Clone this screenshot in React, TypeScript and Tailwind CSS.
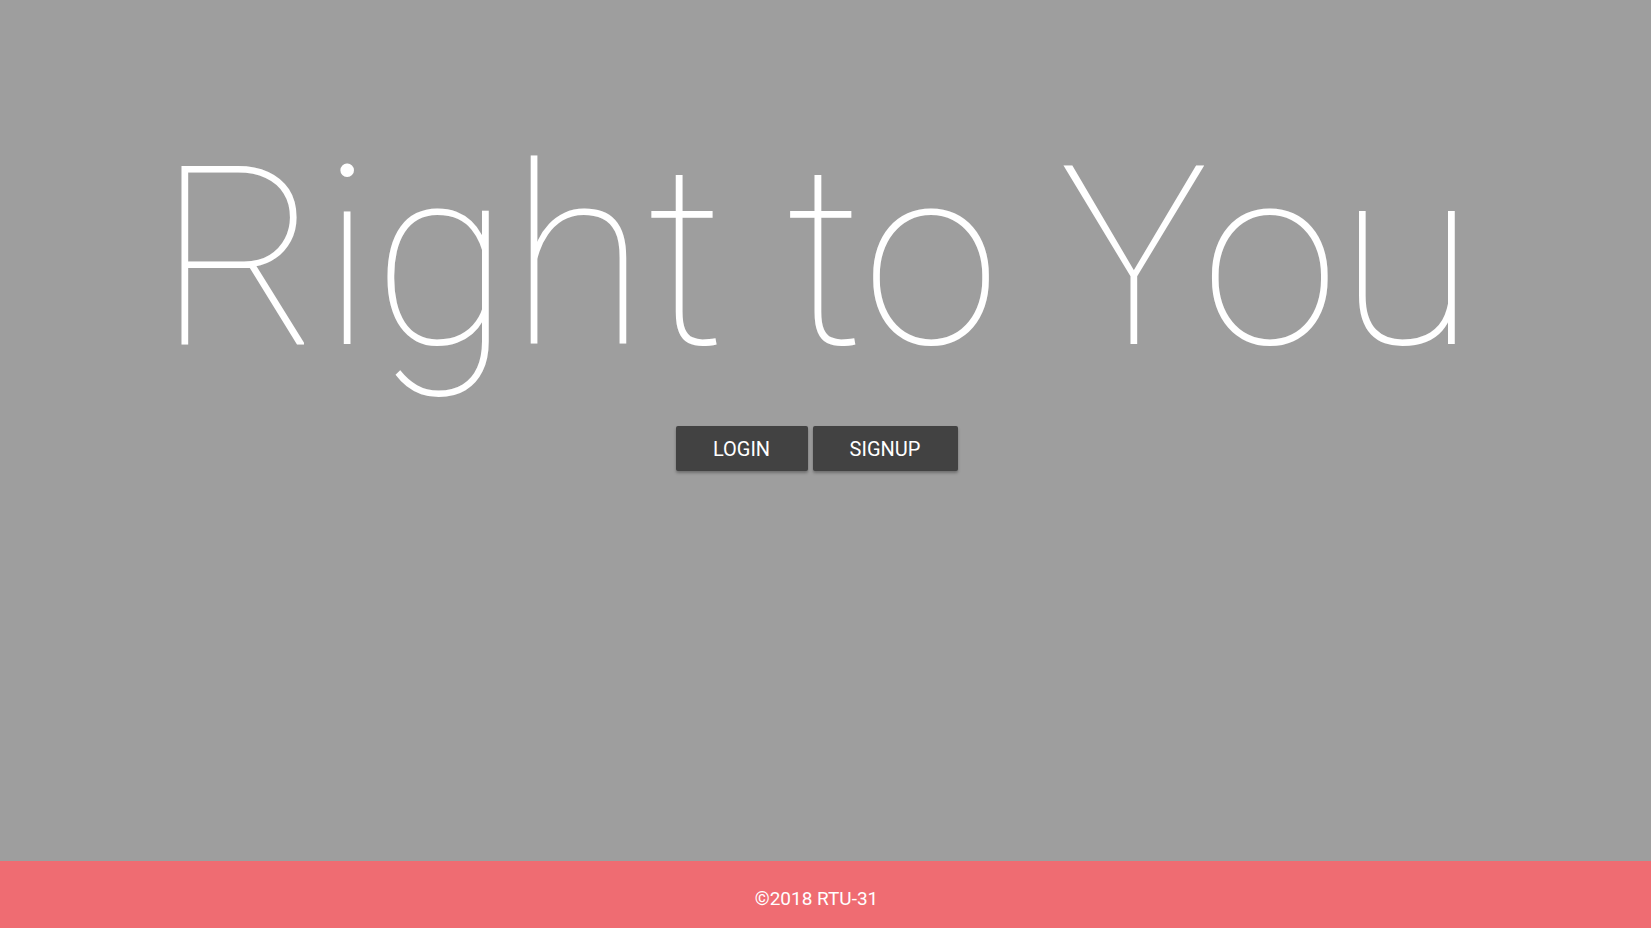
export default function App() {
  return (
    <div className="flex min-h-screen flex-col bg-[#9e9e9e] font-['Roboto',sans-serif] text-white">
      <main className="flex flex-1 flex-col items-center pt-[134px] pr-[18px]">
        <h1 className="text-[250px] font-thin leading-none whitespace-nowrap">Right to You</h1>
        <div className="mt-[42px] flex gap-[5px]">
          <button className="h-[45px] w-[132px] rounded-[2px] bg-[#424242] text-[20px] font-normal uppercase shadow-[0_2px_3px_rgba(0,0,0,0.3)]">
            Login
          </button>
          <button className="h-[45px] w-[145px] rounded-[2px] bg-[#424242] text-[20px] font-normal uppercase shadow-[0_2px_3px_rgba(0,0,0,0.3)]">
            Signup
          </button>
        </div>
      </main>
      <footer className="flex h-[67px] items-center justify-center bg-[#ef6c72] pt-[10px] pr-[18px] text-[19px]">
        ©2018 RTU-31
      </footer>
    </div>
  );
}
